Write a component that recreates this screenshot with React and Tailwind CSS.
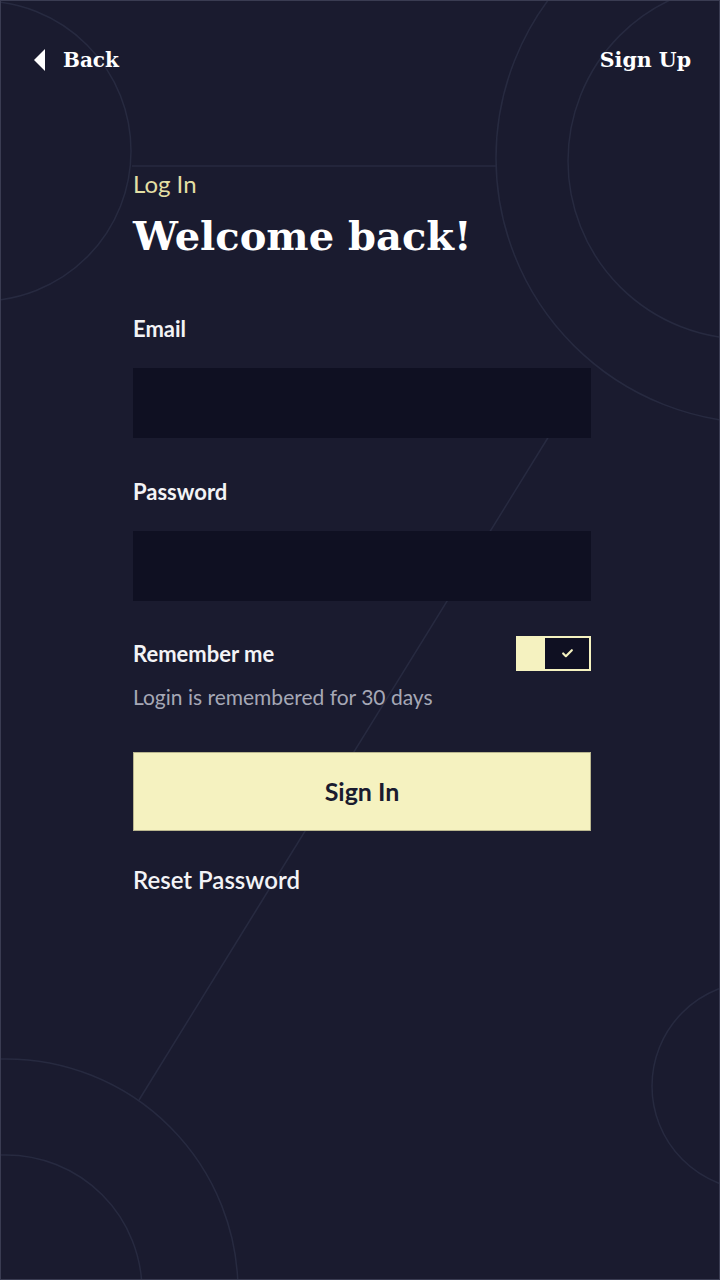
import { Check } from "lucide-react";

const serif = { fontFamily: '"DejaVu Serif", "Liberation Serif", serif' };

function Backdrop() {
  return (
    <svg className="absolute inset-0 pointer-events-none" width="720" height="1280" viewBox="0 0 720 1280" fill="none">
      <g stroke="#272a40" strokeWidth="1.5">
        <circle cx="-20" cy="150" r="150" />
        <circle cx="760" cy="157" r="265" />
        <circle cx="745" cy="160" r="178" />
        <line x1="131" y1="165" x2="495" y2="165" />
        <line x1="548" y1="435" x2="138" y2="1099" />
        <circle cx="5" cy="1290" r="232" />
        <circle cx="5" cy="1290" r="136" />
        <circle cx="755" cy="1085" r="104" />
      </g>
    </svg>
  );
}

function Field({ label }) {
  return (
    <div className="flex flex-col">
      <label className="text-[22px] font-bold leading-[26px] text-[#f3f3f6]">{label}</label>
      <div className="mt-[26px] h-[70px] bg-[#0f1022]" />
    </div>
  );
}

export default function App() {
  return (
    <div
      className="relative min-h-[1280px] w-[720px] overflow-hidden bg-[#1a1b2f] border border-[#3a3c52]"
      style={{ fontFamily: 'Lato, "Open Sans", sans-serif' }}
    >
      <Backdrop />

      <div className="relative flex items-center justify-between pl-[33px] pr-[28px] pt-[45px]">
        <button className="flex items-center gap-[18px] text-white">
          <svg width="11" height="22" viewBox="0 0 11 22">
            <path d="M11 0 L0 11 L11 22 Z" fill="#ffffff" />
          </svg>
          <span className="text-[20px] font-bold leading-[28px]" style={serif}>Back</span>
        </button>
        <button className="text-[20.5px] font-bold leading-[28px] text-white" style={serif}>Sign Up</button>
      </div>

      <div className="relative ml-[132px] mt-[95px] flex w-[458px] flex-col">
        <p className="text-[24px] leading-[30px] text-[#e3dfa4]">Log In</p>
        <h1 className="mt-[12px] text-[40px] font-bold leading-[50px] text-white" style={serif}>
          Welcome back!
        </h1>

        <div className="mt-[55px] flex flex-col gap-[41px]">
          <Field label="Email" />
          <Field label="Password" />
        </div>

        <div className="mt-[35px] flex items-center justify-between">
          <span className="text-[22px] font-bold leading-[26px] text-[#f3f3f6]">Remember me</span>
          <button className="flex h-[35px] w-[75px] border-2 border-[#f5f2c0] bg-[#f5f2c0]">
            <span className="ml-auto flex h-full w-[44px] items-center justify-center bg-[#0f1022]">
              <Check size={13} strokeWidth={4} className="text-[#f5f2c0]" />
            </span>
          </button>
        </div>
        <p className="mt-[12px] text-[21px] leading-[28px] text-[#a6a8b6]">Login is remembered for 30 days</p>

        <button className="mt-[41px] h-[79px] w-full border border-[#b9b68f] bg-[#f5f2c0] text-[25px] font-bold text-[#1a1b2f]">
          Sign In
        </button>

        <button className="mt-[34px] self-start text-[24px] font-semibold leading-[30px] text-[#f3f3f6]">
          Reset Password
        </button>
      </div>
    </div>
  );
}
